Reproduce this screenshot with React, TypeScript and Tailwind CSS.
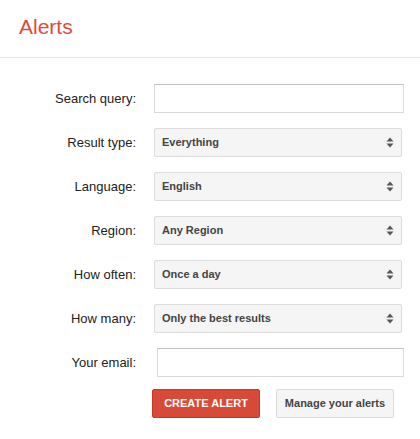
import React from "react";

const selects = [
  { label: "Result type:", value: "Everything" },
  { label: "Language:", value: "English" },
  { label: "Region:", value: "Any Region" },
  { label: "How often:", value: "Once a day" },
  { label: "How many:", value: "Only the best results" },
];

function Arrows() {
  return (
    <svg width="8" height="11" viewBox="0 0 8 11" className="shrink-0">
      <path d="M4 0.5 L7.5 4.5 L0.5 4.5 Z" fill="#555" />
      <path d="M4 10.5 L7.5 6.5 L0.5 6.5 Z" fill="#555" />
    </svg>
  );
}

function Row({ label, children }: { label: string; children: React.ReactNode }) {
  return (
    <div className="flex items-center h-[29px]">
      <label className="w-[136px] shrink-0 text-right text-[13px] text-[#222]">{label}</label>
      <div className="ml-[18px] flex-1 flex">{children}</div>
    </div>
  );
}

export default function App() {
  return (
    <div
      className="w-[420px] h-[439px] bg-white"
      style={{ fontFamily: '"Liberation Sans", Arial, sans-serif' }}
    >
      <div className="h-[58px] border-b border-[#e5e5e5] pl-[19px] pt-[14px]">
        <h1 className="text-[21px] leading-[26px] text-[#dd4b39]">Alerts</h1>
      </div>

      <div className="pt-[26px] flex flex-col gap-[15px]">
        <Row label="Search query:">
          <input
            type="text"
            className="w-[250px] h-[29px] border border-[#d9d9d9] border-t-[#c0c0c0] bg-white outline-none"
          />
        </Row>
        {selects.map((s) => (
          <Row key={s.label} label={s.label}>
            <div className="w-[248px] h-[29px] rounded-[2px] border border-[#dcdcdc] bg-[#f5f5f5] flex items-center justify-between pl-[7px] pr-[7px]">
              <span className="text-[11px] font-bold text-[#444]">{s.value}</span>
              <Arrows />
            </div>
          </Row>
        ))}
        <Row label="Your email:">
          <input
            type="text"
            className="ml-[3px] w-[247px] h-[29px] border border-[#d9d9d9] border-t-[#c0c0c0] bg-white outline-none"
          />
        </Row>
      </div>

      <div className="flex gap-[16px] pl-[152px] pt-[12px]">
        <button className="w-[108px] h-[29px] rounded-[2px] border border-[#c6392a] bg-[#d84a38] text-white text-[11px] font-bold">
          CREATE ALERT
        </button>
        <button className="w-[118px] h-[29px] rounded-[2px] border border-[#dcdcdc] bg-[#f5f5f5] text-[#444] text-[11px] font-bold">
          Manage your alerts
        </button>
      </div>
    </div>
  );
}
